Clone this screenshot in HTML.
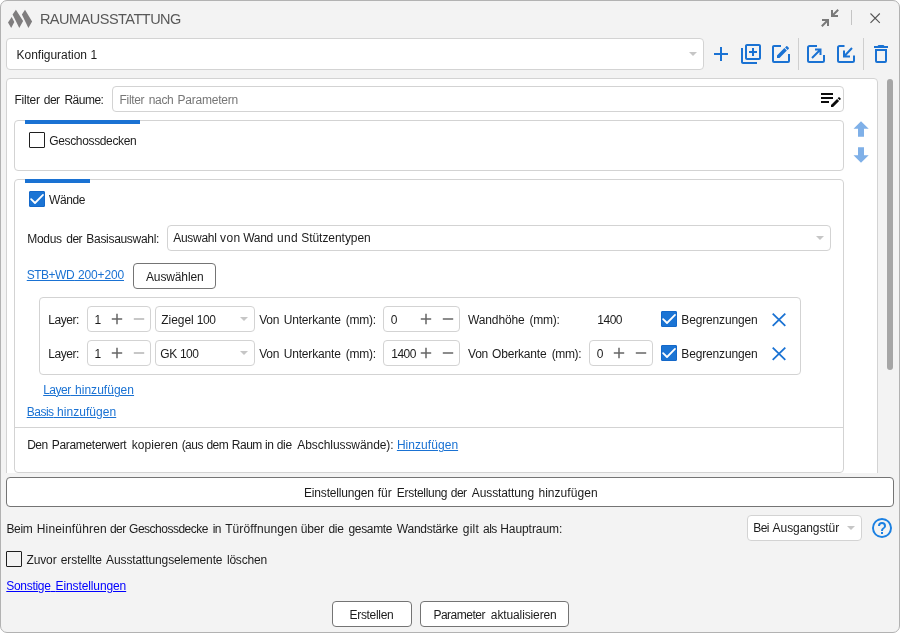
<!DOCTYPE html><html lang="de"><head><meta charset="utf-8"><title>Raumausstattung</title><style>
html,body{margin:0;padding:0;background:#fff;}
body{width:900px;height:633px;overflow:hidden;position:relative;font-family:"Liberation Sans",sans-serif;}
#win{position:absolute;left:0;top:0;width:900px;height:633px;box-sizing:border-box;background:#f3f3f3;border:1px solid #b2b2b2;border-radius:7px;overflow:hidden;}
#root{position:absolute;left:0;top:0;width:900px;height:633px;will-change:transform;}
.b{position:absolute;box-sizing:border-box;background:#fff;border:1px solid #d3d3d3;border-radius:4px;}
.btn{position:absolute;box-sizing:border-box;background:#fff;border:1px solid #747474;border-radius:4px;}
.t{position:absolute;white-space:pre;line-height:16px;height:16px;font-size:12px;}
.u{text-decoration:underline;text-underline-offset:0.5px;text-decoration-thickness:1px;}
.bar{position:absolute;background:#1a72d3;height:4px;}
.cb{position:absolute;box-sizing:border-box;width:16px;height:16px;border:1px solid #1f1f1f;border-radius:1px;background:#fff;}
.cbc{position:absolute;box-sizing:border-box;width:16px;height:16px;background:#1b74d4;border:1px solid #1468c9;border-radius:1px;}
.ln{position:absolute;background:#d3d3d3;}
svg{position:absolute;overflow:visible;}
</style></head><body>
<div id="win"></div><div id="root">
<svg style="left:0;top:0" width="40" height="36" viewBox="0 0 40 36"><path d="M8 22.5L11.7 17L14.3 21.9L11.2 27.9Z M12.6 14.5L15.9 9.8L23.1 21L19.3 27.9Z M21.9 14.5L25 9.8L32.1 21.4L28.4 27.9Z" fill="#7f7d7e"/></svg>
<svg style="left:818px;top:6px" width="24" height="24" viewBox="0 0 24 24"><path d="M19.5,3.09L15,7.59V4H13V11H20V9H16.41L20.91,4.5L19.5,3.09M4,13V15H7.59L3.09,19.5L4.5,20.91L9,16.41V20H11V13H4Z" fill="#7a7a7a"/></svg>
<div class="ln" style="left:851px;top:10px;width:1px;height:15px;background:#c4c4c4"></div>
<svg style="left:870px;top:13px" width="11" height="11" viewBox="0 0 11 11"><path d="M0.5 0.5L9.800 9.800M9.800 0.5L0.5 9.800" stroke="#555" stroke-width="1.1" fill="none"/></svg>
<div class="b" style="left:6px;top:38px;width:698px;height:32px;"></div>
<svg style="left:689px;top:52px" width="8" height="4" viewBox="0 0 8 4"><path d="M0 0H8L4.0 4Z" fill="#c6c6c6"/></svg>
<svg style="left:709px;top:42px" width="24" height="24" viewBox="0 0 24 24"><path d="M19,13H13V19H11V13H5V11H11V5H13V11H19V13Z" fill="#1a72d3"/></svg>
<svg style="left:739px;top:42px" width="24" height="24" viewBox="0 0 24 24"><path d="M18 11H15V14H13V11H10V9H13V6H15V9H18M20 4V16H8V4H20M20 2H8C6.9 2 6 2.9 6 4V16C6 17.11 6.9 18 8 18H20C21.11 18 22 17.11 22 16V4C22 2.9 21.11 2 20 2M4 6H2V20C2 21.11 2.9 22 4 22H18V20H4V6Z" fill="#1a72d3"/></svg>
<svg style="left:768.7px;top:42px" width="24" height="24" viewBox="0 0 24 24"><path d="M5,3C3.89,3 3,3.89 3,5V19A2,2 0 0,0 5,21H19A2,2 0 0,0 21,19V12H19V19H5V5H12V3H5M17.78,4C17.61,4 17.43,4.07 17.3,4.2L16.08,5.41L18.58,7.91L19.8,6.7C20.06,6.44 20.06,6 19.8,5.75L18.25,4.2C18.12,4.07 17.95,4 17.78,4M15.37,6.12L8,13.5V16H10.5L17.87,8.62L15.37,6.12Z" fill="#1a72d3"/></svg>
<div class="ln" style="left:798px;top:38px;width:1px;height:32px;background:#cfcfcf"></div>
<svg style="left:804px;top:42px" width="24" height="24" viewBox="0 0 24 24"><g stroke="#1a72d3" stroke-width="2" fill="none"><path d="M13 4H5.5A1.5 1.5 0 0 0 4 5.5V18.5A1.5 1.5 0 0 0 5.5 20H18.500A1.500 1.500 0 0 0 20 18.500V13"/><path d="M8 16L16.500 7.500M11 7.500H16.500V13"/></g></svg>
<svg style="left:834px;top:42px" width="24" height="24" viewBox="0 0 24 24"><g stroke="#1a72d3" stroke-width="2" fill="none"><path d="M10.500 4H5.500A1.500 1.500 0 0 0 4 5.500V18.500A1.500 1.500 0 0 0 5.500 20H18.500A1.500 1.500 0 0 0 20 18.500V13.500"/><path d="M18 6L10 14.500M10 8.500V14.500H16"/></g></svg>
<div class="ln" style="left:863px;top:38px;width:1px;height:32px;background:#cfcfcf"></div>
<svg style="left:869px;top:42px" width="24" height="24" viewBox="0 0 24 24"><path d="M6,19A2,2 0 0,0 8,21H16A2,2 0 0,0 18,19V7H6V19M8,9H16V19H8V9M15.5,4L14.5,3H9.5L8.5,4H5V6H19V4H15.5Z" fill="#1a72d3"/></svg>
<div style="position:absolute;left:6px;top:78px;width:872px;height:395px;overflow:hidden"><div class="b" style="left:0;top:0;width:872px;height:420px"></div></div>
<div style="position:absolute;left:887px;top:79px;width:6px;height:291px;background:#a6a6a6;border-radius:3px"></div>
<div class="b" style="left:112px;top:86px;width:732px;height:26px;"></div>
<svg style="left:819px;top:87px" width="24" height="24" viewBox="0 0 24 24"><path d="M2,6V8H14V6H2M2,10V12H14V10H2M20.04,10.13C19.9,10.13 19.76,10.19 19.65,10.3L18.65,11.3L20.7,13.35L21.7,12.35C21.92,12.14 21.92,11.79 21.7,11.58L20.42,10.3C20.31,10.19 20.18,10.13 20.04,10.13M18.07,11.88L12,17.94V20H14.06L20.12,13.93L18.07,11.88M2,14V16H10V14H2Z" fill="#0c0c0c"/></svg>
<div class="b" style="left:14px;top:120px;width:830px;height:51px;"></div>
<div class="bar" style="left:25px;top:120px;width:115px"></div>
<div class="cb" style="left:29px;top:132px"></div>
<svg style="left:853px;top:120px" width="16" height="46" viewBox="0 0 16 46"><path d="M8 1.3L15.700 8.700H11V16.700H5V8.700H0.500Z M5 27.200H11V35.200H15.700L8 42.700L0.500 35.200H5Z" fill="#7fb0e8"/></svg>
<div style="position:absolute;left:14px;top:179px;width:830px;height:294px;overflow:hidden"><div class="b" style="left:0;top:0;width:830px;height:294px"></div></div>
<div class="bar" style="left:25px;top:179px;width:65px"></div>
<div class="cbc" style="left:29px;top:191px"></div><svg style="left:29px;top:191px" width="16" height="16" viewBox="0 0 16 16"><path d="M2.1 8.1L6 12L14 3.900" stroke="#fff" stroke-width="1.800" stroke-linecap="round" stroke-linejoin="round" fill="none"/></svg>
<div class="b" style="left:167px;top:225px;width:664px;height:26px;"></div>
<svg style="left:816px;top:236px" width="8" height="4" viewBox="0 0 8 4"><path d="M0 0H8L4.0 4Z" fill="#c6c6c6"/></svg>
<div class="btn" style="left:133px;top:263px;width:83px;height:26px;"></div>
<div class="b" style="left:39px;top:297px;width:762px;height:78px;"></div>
<div class="b" style="left:87px;top:306px;width:64px;height:26px;"></div>
<svg style="left:111px;top:313px" width="12" height="12" viewBox="0 0 12 12"><path d="M0.800 6H11.200M6 0.800V11.200" stroke="#666666" stroke-width="1.500" fill="none"/></svg><svg style="left:133px;top:313px" width="12" height="12" viewBox="0 0 12 12"><path d="M0.800 6H11.200" stroke="#b4b4b4" stroke-width="1.500" fill="none"/></svg>
<div class="b" style="left:155px;top:306px;width:100px;height:26px;"></div>
<svg style="left:240px;top:317px" width="8" height="4" viewBox="0 0 8 4"><path d="M0 0H8L4.0 4Z" fill="#c6c6c6"/></svg>
<div class="b" style="left:383px;top:306px;width:77px;height:26px;"></div>
<svg style="left:420px;top:313px" width="12" height="12" viewBox="0 0 12 12"><path d="M0.800 6H11.200M6 0.800V11.200" stroke="#666666" stroke-width="1.500" fill="none"/></svg><svg style="left:442px;top:313px" width="12" height="12" viewBox="0 0 12 12"><path d="M0.800 6H11.200" stroke="#666666" stroke-width="1.500" fill="none"/></svg>
<div class="cbc" style="left:661px;top:311px"></div><svg style="left:661px;top:311px" width="16" height="16" viewBox="0 0 16 16"><path d="M2.1 8.1L6 12L14 3.900" stroke="#fff" stroke-width="1.800" stroke-linecap="round" stroke-linejoin="round" fill="none"/></svg>
<svg style="left:772px;top:312.5px" width="14" height="13.5" viewBox="0 0 14 13.5"><path d="M0.7 0.7L13.3 12.8M13.3 0.7L0.7 12.8" stroke="#1a72d3" stroke-width="1.8" fill="none"/></svg>
<div class="b" style="left:87px;top:340px;width:64px;height:26px;"></div>
<svg style="left:111px;top:347px" width="12" height="12" viewBox="0 0 12 12"><path d="M0.800 6H11.200M6 0.800V11.200" stroke="#666666" stroke-width="1.500" fill="none"/></svg><svg style="left:133px;top:347px" width="12" height="12" viewBox="0 0 12 12"><path d="M0.800 6H11.200" stroke="#b4b4b4" stroke-width="1.500" fill="none"/></svg>
<div class="b" style="left:155px;top:340px;width:100px;height:26px;"></div>
<svg style="left:240px;top:351px" width="8" height="4" viewBox="0 0 8 4"><path d="M0 0H8L4.0 4Z" fill="#c6c6c6"/></svg>
<div class="b" style="left:383px;top:340px;width:77px;height:26px;"></div>
<svg style="left:420px;top:347px" width="12" height="12" viewBox="0 0 12 12"><path d="M0.800 6H11.200M6 0.800V11.200" stroke="#666666" stroke-width="1.500" fill="none"/></svg><svg style="left:442px;top:347px" width="12" height="12" viewBox="0 0 12 12"><path d="M0.800 6H11.200" stroke="#666666" stroke-width="1.500" fill="none"/></svg>
<div class="cbc" style="left:661px;top:345px"></div><svg style="left:661px;top:345px" width="16" height="16" viewBox="0 0 16 16"><path d="M2.1 8.1L6 12L14 3.900" stroke="#fff" stroke-width="1.800" stroke-linecap="round" stroke-linejoin="round" fill="none"/></svg>
<svg style="left:772px;top:346.5px" width="14" height="13.5" viewBox="0 0 14 13.5"><path d="M0.7 0.7L13.3 12.8M13.3 0.7L0.7 12.8" stroke="#1a72d3" stroke-width="1.8" fill="none"/></svg>
<div class="b" style="left:589px;top:340px;width:64px;height:26px;"></div>
<svg style="left:613px;top:347px" width="12" height="12" viewBox="0 0 12 12"><path d="M0.800 6H11.200M6 0.800V11.200" stroke="#666666" stroke-width="1.500" fill="none"/></svg><svg style="left:635px;top:347px" width="12" height="12" viewBox="0 0 12 12"><path d="M0.800 6H11.200" stroke="#666666" stroke-width="1.500" fill="none"/></svg>
<div class="ln" style="left:15px;top:427px;width:828px;height:1px"></div>
<div class="btn" style="left:6px;top:477px;width:888px;height:30px;"></div>
<div class="b" style="left:747px;top:515px;width:115px;height:26px;"></div>
<svg style="left:847px;top:526px" width="8" height="4" viewBox="0 0 8 4"><path d="M0 0H8L4.0 4Z" fill="#c6c6c6"/></svg>
<svg style="left:870px;top:516px" width="24" height="24" viewBox="0 0 24 24"><path d="M11,18H13V16H11V18M12,2A10,10 0 0,0 2,12A10,10 0 0,0 12,22A10,10 0 0,0 22,12A10,10 0 0,0 12,2M12,20C7.59,20 4,16.41 4,12C4,7.59 7.59,4 12,4C16.41,4 20,7.59 20,12C20,16.41 16.41,20 12,20M12,6A4,4 0 0,0 8,10H10A2,2 0 0,1 12,8A2,2 0 0,1 14,10C14,12 11,11.75 11,15H13C13,12.75 16,12.5 16,10A4,4 0 0,0 12,6Z" fill="#1b80e2"/></svg>
<div class="cb" style="left:6px;top:551px;background:transparent"></div>
<div class="btn" style="left:332px;top:601px;width:80px;height:26px;"></div>
<div class="btn" style="left:420px;top:601px;width:149px;height:26px;"></div>
<span class="t" style="left:39.89px;top:10.6px;color:#585858;font-size:14.5px;"><span style="letter-spacing:-0.5px">RAUMAUSSTATTUNG</span></span>
<span class="t" style="left:16.6px;top:46.75px;color:#1c1c1c;"><span style="letter-spacing:-0.03px">Konfiguration</span><span style="word-spacing:0.12px"> </span><span style="letter-spacing:0px">1</span></span>
<span class="t" style="left:14.4px;top:92px;color:#1c1c1c;"><span style="letter-spacing:-0.21px">Filter</span><span style="word-spacing:0.61px"> </span><span style="letter-spacing:-0.5px">der</span><span style="word-spacing:1.45px"> </span><span style="letter-spacing:-0.5px">Räume:</span></span>
<span class="t" style="left:119.6px;top:91.6px;color:#767676;"><span style="letter-spacing:-0.35px">Filter</span><span style="word-spacing:1.32px"> </span><span style="letter-spacing:-0.38px">nach</span><span style="word-spacing:0.87px"> </span><span style="letter-spacing:-0.22px">Parametern</span></span>
<span class="t" style="left:49.3px;top:133px;color:#1c1c1c;"><span style="letter-spacing:-0.36px">Geschossdecken</span></span>
<span class="t" style="left:49px;top:192px;color:#1c1c1c;"><span style="letter-spacing:-0.4px">Wände</span></span>
<span class="t" style="left:27.2px;top:230.6px;color:#1c1c1c;"><span style="letter-spacing:-0.3px">Modus</span><span style="word-spacing:1.15px"> </span><span style="letter-spacing:-0.5px">der</span><span style="word-spacing:0.95px"> </span><span style="letter-spacing:-0.31px">Basisauswahl:</span></span>
<span class="t" style="left:173.3px;top:229.5px;color:#1c1c1c;"><span style="letter-spacing:-0.3px">Auswahl</span><span style="word-spacing:0.1px"> </span><span style="letter-spacing:0.41px">von</span><span style="word-spacing:-0.72px"> </span><span style="letter-spacing:-0.31px">Wand</span><span style="word-spacing:0.8px"> </span><span style="letter-spacing:0.33px">und</span><span style="word-spacing:-0.13px"> </span><span style="letter-spacing:-0.05px">Stützentypen</span></span>
<span class="t u" style="left:26.76px;top:266.8px;color:#1a72d3;"><span style="letter-spacing:-0.5px">STB+WD</span><span style="word-spacing:0.56px"> </span><span style="letter-spacing:-0.15px">200+200</span></span>
<span class="t" style="left:146px;top:269px;color:#1c1c1c;"><span style="letter-spacing:-0.13px">Auswählen</span></span>
<span class="t" style="left:48.3px;top:311.6px;color:#1c1c1c;"><span style="letter-spacing:-0.46px">Layer:</span></span>
<span class="t" style="left:48.3px;top:345.6px;color:#1c1c1c;"><span style="letter-spacing:-0.46px">Layer:</span></span>
<span class="t" style="left:94.5px;top:311.6px;color:#1c1c1c;"><span style="letter-spacing:0px">1</span></span>
<span class="t" style="left:94.5px;top:345.6px;color:#1c1c1c;"><span style="letter-spacing:0px">1</span></span>
<span class="t" style="left:161.3px;top:311.6px;color:#1c1c1c;"><span style="letter-spacing:-0.06px">Ziegel</span><span style="word-spacing:-0.11px"> </span><span style="letter-spacing:-0.5px">100</span></span>
<span class="t" style="left:160.33px;top:345.6px;color:#1c1c1c;"><span style="letter-spacing:-0.5px">GK</span><span style="word-spacing:-0.08px"> </span><span style="letter-spacing:-0.5px">100</span></span>
<span class="t" style="left:259.2px;top:311.6px;color:#1c1c1c;"><span style="letter-spacing:-0.26px">Von</span><span style="word-spacing:1.25px"> </span><span style="letter-spacing:-0.17px">Unterkante</span><span style="word-spacing:1.66px"> </span><span style="letter-spacing:-0.25px">(mm):</span></span>
<span class="t" style="left:259.2px;top:345.6px;color:#1c1c1c;"><span style="letter-spacing:-0.26px">Von</span><span style="word-spacing:1.25px"> </span><span style="letter-spacing:-0.17px">Unterkante</span><span style="word-spacing:1.66px"> </span><span style="letter-spacing:-0.25px">(mm):</span></span>
<span class="t" style="left:390.65px;top:311.6px;color:#1c1c1c;"><span style="letter-spacing:0px">0</span></span>
<span class="t" style="left:391.24px;top:345.6px;color:#1c1c1c;"><span style="letter-spacing:-0.5px">1400</span></span>
<span class="t" style="left:468px;top:311.6px;color:#1c1c1c;"><span style="letter-spacing:-0.13px">Wandhöhe</span><span style="word-spacing:1.62px"> </span><span style="letter-spacing:-0.25px">(mm):</span></span>
<span class="t" style="left:597.34px;top:311.6px;color:#1c1c1c;"><span style="letter-spacing:-0.5px">1400</span></span>
<span class="t" style="left:468.1px;top:345.6px;color:#1c1c1c;"><span style="letter-spacing:-0.31px">Von</span><span style="word-spacing:0.8px"> </span><span style="letter-spacing:-0.17px">Oberkante</span><span style="word-spacing:1.86px"> </span><span style="letter-spacing:-0.37px">(mm):</span></span>
<span class="t" style="left:596.7px;top:345.6px;color:#1c1c1c;"><span style="letter-spacing:0px">0</span></span>
<span class="t" style="left:681.3px;top:311.6px;color:#1c1c1c;"><span style="letter-spacing:-0.15px">Begrenzungen</span></span>
<span class="t" style="left:681.3px;top:345.6px;color:#1c1c1c;"><span style="letter-spacing:-0.15px">Begrenzungen</span></span>
<span class="t u" style="left:43.19px;top:381.8px;color:#1a72d3;"><span style="letter-spacing:-0.5px">Layer</span><span style="word-spacing:0.96px"> </span><span style="letter-spacing:0.03px">hinzufügen</span></span>
<span class="t u" style="left:26.73px;top:403.8px;color:#1a72d3;"><span style="letter-spacing:-0.5px">Basis</span><span style="word-spacing:0.09px"> </span><span style="letter-spacing:0.05px">hinzufügen</span></span>
<span class="t" style="left:27.13px;top:437.3px;color:#1c1c1c;"><span style="letter-spacing:-0.5px">Den</span><span style="word-spacing:0.72px"> </span><span style="letter-spacing:-0.31px">Parameterwert</span><span style="word-spacing:2.05px"> </span><span style="letter-spacing:0.03px">kopieren</span><span style="word-spacing:0.24px"> </span><span style="letter-spacing:-0.5px">(aus</span><span style="word-spacing:0.07px"> </span><span style="letter-spacing:-0.5px">dem</span><span style="word-spacing:0.24px"> </span><span style="letter-spacing:-0.5px">Raum</span><span style="word-spacing:-0.17px"> </span><span style="letter-spacing:-0.5px">in</span><span style="word-spacing:0.11px"> </span><span style="letter-spacing:-0.37px">die</span><span style="word-spacing:2.26px"> </span><span style="letter-spacing:-0.07px">Abschlusswände):</span></span>
<span class="t u" style="left:396.9px;top:437.3px;color:#1a72d3;"><span style="letter-spacing:0.05px">Hinzufügen</span></span>
<span class="t" style="left:304px;top:485px;color:#1c1c1c;"><span style="letter-spacing:-0.17px">Einstellungen</span><span style="word-spacing:0.57px"> </span><span style="letter-spacing:0px">für</span><span style="word-spacing:1.67px"> </span><span style="letter-spacing:-0.3px">Erstellung</span><span style="word-spacing:0.27px"> </span><span style="letter-spacing:-0.5px">der</span><span style="word-spacing:1.85px"> </span><span style="letter-spacing:-0.11px">Ausstattung</span><span style="word-spacing:1.1px"> </span><span style="letter-spacing:0.05px">hinzufügen</span></span>
<span class="t" style="left:6.5px;top:520.5px;color:#1c1c1c;"><span style="letter-spacing:-0.38px">Beim</span><span style="word-spacing:1.05px"> </span><span style="letter-spacing:0.18px">Hineinführen</span><span style="word-spacing:-0.36px"> </span><span style="letter-spacing:-0.5px">der</span><span style="word-spacing:-0.06px"> </span><span style="letter-spacing:-0.5px">Geschossdecke</span><span style="word-spacing:1.41px"> </span><span style="letter-spacing:-0.5px">in</span><span style="word-spacing:0.76px"> </span><span style="letter-spacing:0.11px">Türöffnungen</span><span style="word-spacing:-0.12px"> </span><span style="letter-spacing:-0.24px">über</span><span style="word-spacing:1.21px"> </span><span style="letter-spacing:-0.32px">die</span><span style="word-spacing:1.61px"> </span><span style="letter-spacing:-0.33px">gesamte</span><span style="word-spacing:1.32px"> </span><span style="letter-spacing:-0.26px">Wandstärke</span><span style="word-spacing:1.65px"> </span><span style="letter-spacing:0.2px">gilt</span><span style="word-spacing:0.66px"> </span><span style="letter-spacing:-0.5px">als</span><span style="word-spacing:0px"> </span><span style="letter-spacing:-0.06px">Hauptraum:</span></span>
<span class="t" style="left:753.16px;top:520px;color:#1c1c1c;"><span style="letter-spacing:-0.5px">Bei</span><span style="word-spacing:0.26px"> </span><span style="letter-spacing:-0.08px">Ausgangstür</span></span>
<span class="t" style="left:26.4px;top:551.8px;color:#1c1c1c;"><span style="letter-spacing:-0.09px">Zuvor</span><span style="word-spacing:0.76px"> </span><span style="letter-spacing:-0.09px">erstellte</span><span style="word-spacing:0.79px"> </span><span style="letter-spacing:-0.12px">Ausstattungselemente</span><span style="word-spacing:1.12px"> </span><span style="letter-spacing:-0.18px">löschen</span></span>
<span class="t u" style="left:6.3px;top:577.6px;color:#0000ff;"><span style="letter-spacing:-0.3px">Sonstige</span><span style="word-spacing:1.6px"> </span><span style="letter-spacing:-0.11px">Einstellungen</span></span>
<span class="t" style="left:349.5px;top:606.8px;color:#1c1c1c;"><span style="letter-spacing:-0.31px">Erstellen</span></span>
<span class="t" style="left:433.44px;top:606.8px;color:#1c1c1c;"><span style="letter-spacing:-0.5px">Parameter</span><span style="word-spacing:2.51px"> </span><span style="letter-spacing:-0.12px">aktualisieren</span></span>
</div></body></html>
